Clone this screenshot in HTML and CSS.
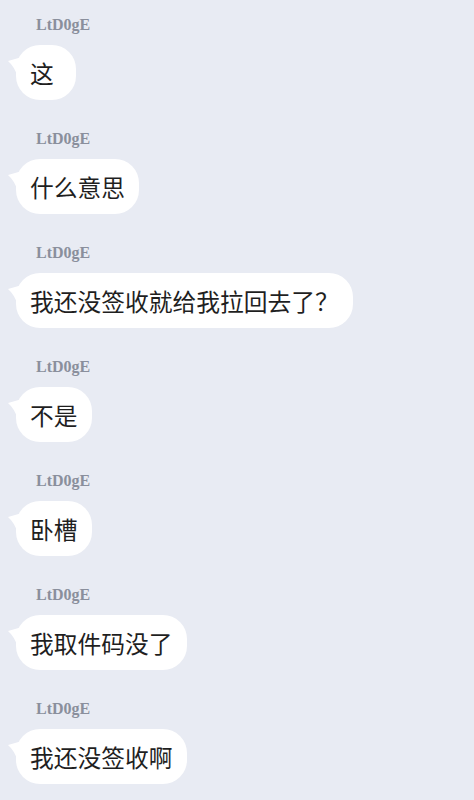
FILE: index.html
```html
<!DOCTYPE html>
<html lang="zh-CN">
  <head>
    <meta charset="UTF-8" />
    <meta name="viewport" content="width=device-width, initial-scale=1.0" />
    <title>Chat</title>
    <link rel="stylesheet" href="styles.css">
  </head>
  <body>
    <div class="chat">
      <div class="message">
        <div class="sender">LtD0gE</div>
        <div class="bubble">这</div>
      </div>
      <div class="message">
        <div class="sender">LtD0gE</div>
        <div class="bubble">什么意思</div>
      </div>
      <div class="message">
        <div class="sender">LtD0gE</div>
        <div class="bubble">我还没签收就给我拉回去了？</div>
      </div>
      <div class="message">
        <div class="sender">LtD0gE</div>
        <div class="bubble">不是</div>
      </div>
      <div class="message">
        <div class="sender">LtD0gE</div>
        <div class="bubble">卧槽</div>
      </div>
      <div class="message">
        <div class="sender">LtD0gE</div>
        <div class="bubble">我取件码没了</div>
      </div>
      <div class="message">
        <div class="sender">LtD0gE</div>
        <div class="bubble">我还没签收啊</div>
      </div>
    </div>
  </body>
</html>
```

FILE: styles.css
```css
/* Global Styles */
body {
  margin: 0;
  padding: 0;
  background: #e8ebf3;
  font-family: "Noto Sans CJK SC", "Noto Sans", sans-serif;
  height: 100vh;
  overflow: hidden;
}

.chat {
  display: flex;
  flex-direction: column;
  gap: 29px;
  padding-top: 15px;
}

.message {
  display: flex;
  flex-direction: column;
  align-items: flex-start;
}

/* Sender name */
.sender {
  font-family: "Liberation Serif", serif;
  font-weight: bold;
  font-size: 16px;
  line-height: 20px;
  color: #8a8f9c;
  padding-left: 36px;
  margin-bottom: 10px;
}

/* Bubble with a small tail on the left */
.bubble {
  position: relative;
  display: inline-flex;
  align-items: center;
  box-sizing: border-box;
  min-width: 60px;
  height: 55px;
  margin-left: 16px;
  padding: 0 14px;
  background: #ffffff;
  border-radius: 24px;
  font-size: 23.75px;
  color: #1f1f1f;
}

.bubble::before {
  content: "";
  position: absolute;
  left: -8px;
  top: 11px;
  width: 14px;
  height: 22px;
  background: url("data:image/svg+xml,%3Csvg xmlns='http://www.w3.org/2000/svg' width='14' height='22'%3E%3Cpath d='M14 1 L0 5 Q7 11 10 22 L14 22 Z' fill='white'/%3E%3C/svg%3E") no-repeat;
}
```
